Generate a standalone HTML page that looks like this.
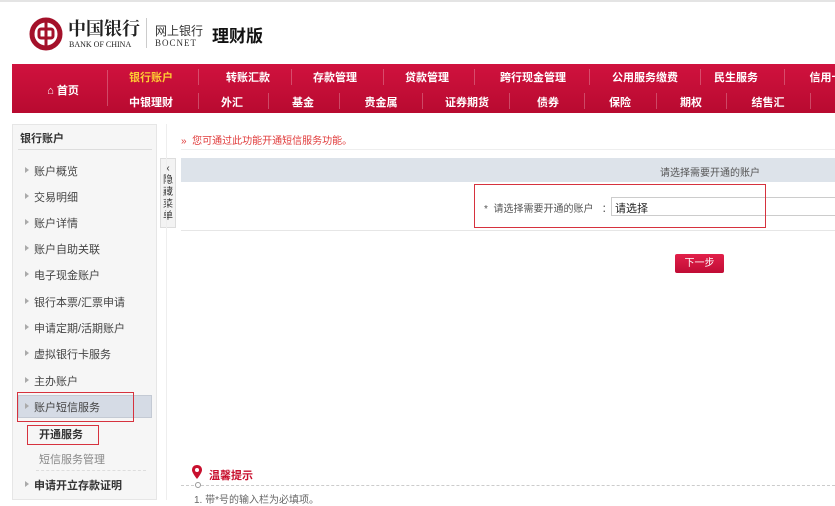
<!DOCTYPE html>
<html><head><meta charset="utf-8"><style>
*{margin:0;padding:0;box-sizing:border-box}
body{width:835px;height:500px;overflow:hidden;background:#fff;font-family:"Liberation Sans","Noto Sans CJK SC",sans-serif;position:relative;font-size:11px;color:#333}
.a{position:absolute;white-space:nowrap}
.nav{left:12px;top:64px;width:823px;height:49px;background:linear-gradient(#d0123e,#b80a30)}
.n{position:absolute;color:#fff;font-weight:bold;font-size:11px;transform:translateX(-50%)}
.sep{position:absolute;width:1px;height:16px;background:rgba(255,255,255,.25)}
.side{left:12px;top:124px;width:145px;height:376px;background:#f6f6f6;border:1px solid #e6e6e6}
.it{position:absolute;left:34px;font-size:11px;color:#444}
.it:before{content:"";position:absolute;left:-9px;top:4px;border-left:4px solid #aaa;border-top:3px solid transparent;border-bottom:3px solid transparent}
.rb{position:absolute;border:1px solid #d6323e}
</style></head><body>
<div class="a" style="left:0;top:0;width:835px;height:2px;background:#e4e4e4"></div>
<svg class="a" style="left:29px;top:17px" width="34" height="34" viewBox="0 0 34 34"><circle cx="17" cy="17" r="14" fill="none" stroke="#a4112a" stroke-width="5"/><rect x="10" y="12" width="14" height="9" rx="2" fill="none" stroke="#a4112a" stroke-width="3"/><rect x="15.5" y="3" width="3" height="28" fill="#a4112a"/></svg>
<div class="a" style="left:68px;top:15px;font-family:'Noto Serif CJK SC',serif;font-size:18px;font-weight:bold;color:#222">中国银行</div>
<div class="a" style="left:69px;top:40px;font-family:'Liberation Serif',serif;font-size:8px;color:#222">BANK OF CHINA</div>
<div class="a" style="left:146px;top:18px;width:1px;height:30px;background:#ccc"></div>
<div class="a" style="left:155px;top:22px;font-size:12px;color:#333">网上银行</div>
<div class="a" style="left:155px;top:38px;font-family:'Liberation Serif',serif;font-size:9px;letter-spacing:1px;color:#333">BOCNET</div>
<div class="a" style="left:212px;top:22px;font-size:17px;font-weight:bold;color:#111">理财版</div>
<div class="a nav">
<div class="n" style="left:51px;top:18px">⌂ 首页</div>
<div class="sep" style="left:95px;top:6px;height:36px"></div>
<div class="n" style="left:139px;top:5px;color:#ffcc33">银行账户</div>
<div class="n" style="left:236px;top:5px">转账汇款</div>
<div class="n" style="left:323px;top:5px">存款管理</div>
<div class="n" style="left:415px;top:5px">贷款管理</div>
<div class="n" style="left:521px;top:5px">跨行现金管理</div>
<div class="n" style="left:633px;top:5px">公用服务缴费</div>
<div class="n" style="left:724px;top:5px">民生服务</div>
<div class="n" style="left:814px;top:5px">信用卡</div>
<div class="n" style="left:139px;top:30px">中银理财</div>
<div class="n" style="left:220px;top:30px">外汇</div>
<div class="n" style="left:291px;top:30px">基金</div>
<div class="n" style="left:369px;top:30px">贵金属</div>
<div class="n" style="left:455px;top:30px">证券期货</div>
<div class="n" style="left:536px;top:30px">债券</div>
<div class="n" style="left:608px;top:30px">保险</div>
<div class="n" style="left:679px;top:30px">期权</div>
<div class="n" style="left:756px;top:30px">结售汇</div>
<div class="sep" style="left:186px;top:5px"></div><div class="sep" style="left:279px;top:5px"></div><div class="sep" style="left:371px;top:5px"></div><div class="sep" style="left:462px;top:5px"></div><div class="sep" style="left:577px;top:5px"></div><div class="sep" style="left:688px;top:5px"></div><div class="sep" style="left:772px;top:5px"></div>
<div class="sep" style="left:186px;top:29px"></div><div class="sep" style="left:256px;top:29px"></div><div class="sep" style="left:327px;top:29px"></div><div class="sep" style="left:410px;top:29px"></div><div class="sep" style="left:497px;top:29px"></div><div class="sep" style="left:572px;top:29px"></div><div class="sep" style="left:644px;top:29px"></div><div class="sep" style="left:714px;top:29px"></div><div class="sep" style="left:798px;top:29px"></div>
</div>
<div class="a side"></div>
<div class="a" style="left:20px;top:130px;font-size:11px;font-weight:bold;color:#333">银行账户</div>
<div class="a" style="left:18px;top:149px;width:134px;height:1px;background:#ddd"></div>
<div class="it a" style="top:163px">账户概览</div>
<div class="it a" style="top:189px">交易明细</div>
<div class="it a" style="top:215px">账户详情</div>
<div class="it a" style="top:241px">账户自助关联</div>
<div class="it a" style="top:267px">电子现金账户</div>
<div class="it a" style="top:294px">银行本票/汇票申请</div>
<div class="it a" style="top:320px">申请定期/活期账户</div>
<div class="it a" style="top:346px">虚拟银行卡服务</div>
<div class="it a" style="top:373px">主办账户</div>
<div class="a" style="left:18px;top:395px;width:134px;height:23px;background:#d5dbe5;border:1px solid #c4cad4"></div>
<div class="it a" style="top:399px">账户短信服务</div>
<div class="a" style="left:39px;top:426px;font-size:11px;font-weight:bold;color:#333">开通服务</div>
<div class="a" style="left:39px;top:451px;font-size:11px;color:#888">短信服务管理</div>
<div class="a" style="left:36px;top:470px;width:110px;border-top:1px dashed #ddd"></div>
<div class="it a" style="top:477px;font-weight:bold;color:#333">申请开立存款证明</div>
<div class="rb" style="left:17px;top:392px;width:117px;height:30px"></div>
<div class="rb" style="left:27px;top:425px;width:72px;height:20px"></div>
<div class="a" style="left:160px;top:158px;width:16px;height:70px;background:#f3f3f3;border:1px solid #ddd;font-size:10px;line-height:12px;text-align:center;white-space:normal;padding-top:4px;color:#333">‹<br>隐<br>藏<br>菜<br>单</div>
<div class="a" style="left:166px;top:124px;width:1px;height:376px;background:#eee"></div>
<div class="a" style="left:181px;top:132px;font-size:10px;color:#e03a3a">»&nbsp; 您可通过此功能开通短信服务功能。</div>
<div class="a" style="left:181px;top:149px;width:654px;height:1px;background:#eee"></div>
<div class="a" style="left:181px;top:158px;width:654px;height:24px;background:#dde3ea"></div>
<div class="a" style="left:660px;top:164px;font-size:10px;color:#555">请选择需要开通的账户</div>
<div class="a" style="left:181px;top:230px;width:654px;height:1px;background:#e6e6e6"></div>
<div class="a" style="left:484px;top:200px;font-size:10px;color:#555">*&nbsp; 请选择需要开通的账户&nbsp;&nbsp;&nbsp;：</div>
<div class="a" style="left:611px;top:197px;width:224px;height:19px;border:1px solid #ccc;border-right:none;padding:2px 3px;font-size:11px;color:#222">请选择</div>
<div class="rb" style="left:474px;top:184px;width:292px;height:44px"></div>
<div class="a" style="left:675px;top:254px;width:49px;height:19px;background:linear-gradient(#e2204a,#c00c35);border-radius:2px;color:#fff;font-size:10px;text-align:center;line-height:19px">下一步</div>
<svg class="a" style="left:192px;top:465px" width="10" height="14" viewBox="0 0 10 14"><path d="M5 0C2 0 0 2 0 5c0 3 5 9 5 9s5-6 5-9c0-3-2-5-5-5z" fill="#c8102e"/><circle cx="5" cy="5" r="2" fill="#fff"/></svg>
<div class="a" style="left:209px;top:467px;font-size:11px;font-weight:bold;color:#c8102e">温馨提示</div>
<div class="a" style="left:181px;top:485px;width:654px;border-top:1px dashed #ccc"></div>
<div class="a" style="left:195px;top:482px;width:6px;height:6px;border:1px solid #999;border-radius:50%;background:#fff"></div>
<div class="a" style="left:194px;top:491px;font-size:10px;color:#666">1. 带*号的输入栏为必填项。</div>
</body></html>
